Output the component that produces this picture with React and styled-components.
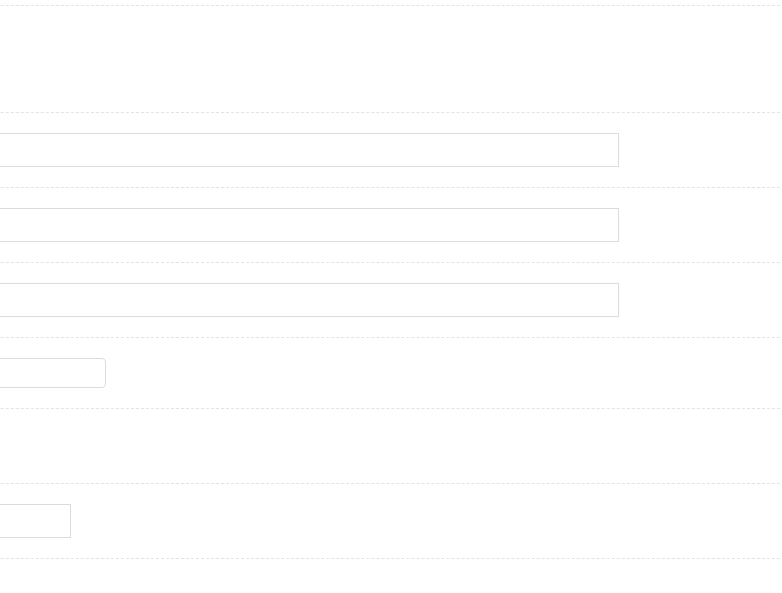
import React from "react";
import styled, { createGlobalStyle } from "styled-components";

const GlobalStyle = createGlobalStyle`
  html, body {
    margin: 0;
    padding: 0;
    background: #fff;
    font-family: "Liberation Sans", Arial, sans-serif;
    font-size: 13px;
    color: #1d2327;
  }
`;

const Page = styled.div`
  width: 780px;
  padding-top: 5px;
  overflow: hidden;
`;

// the label column sits off to the left, out of view
const FormTable = styled.div`
  margin-left: -420px;
  border-top: 1px dashed #e3e3e3;
`;

const Row = styled.div`
  display: grid;
  grid-template-columns: 220px 1fr;
  min-height: ${({ $height }) => $height || 0}px;
  box-sizing: border-box;
  border-bottom: 1px dashed #e3e3e3;
  align-items: start;
`;

const Label = styled.div`
  padding: 20px 10px;
`;

const Field = styled.div`
  padding: 20px 0;
`;

const TextInput = styled.input`
  display: block;
  box-sizing: border-box;
  width: ${({ $width }) => $width}px;
  height: ${({ $tall }) => ($tall ? 34 : 30)}px;
  margin: 0;
  padding: 0 8px;
  border: 1px solid #dcdcdc;
  border-radius: ${({ $round }) => ($round ? 4 : 0)}px;
  background: #fff;
  font: inherit;
  outline: none;
`;

export default function App() {
  return (
    <>
      <GlobalStyle />
      <Page>
        <FormTable>
          <Row $height={107}>
            <Label />
            <Field />
          </Row>
          <Row>
            <Label />
            <Field>
              <TextInput $width={819} $tall />
            </Field>
          </Row>
          <Row>
            <Label />
            <Field>
              <TextInput $width={819} $tall />
            </Field>
          </Row>
          <Row>
            <Label />
            <Field>
              <TextInput $width={819} $tall />
            </Field>
          </Row>
          <Row>
            <Label />
            <Field>
              <TextInput $width={306} $round />
            </Field>
          </Row>
          <Row $height={75}>
            <Label />
            <Field />
          </Row>
          <Row>
            <Label />
            <Field>
              <TextInput $width={271} $tall />
            </Field>
          </Row>
        </FormTable>
      </Page>
    </>
  );
}
